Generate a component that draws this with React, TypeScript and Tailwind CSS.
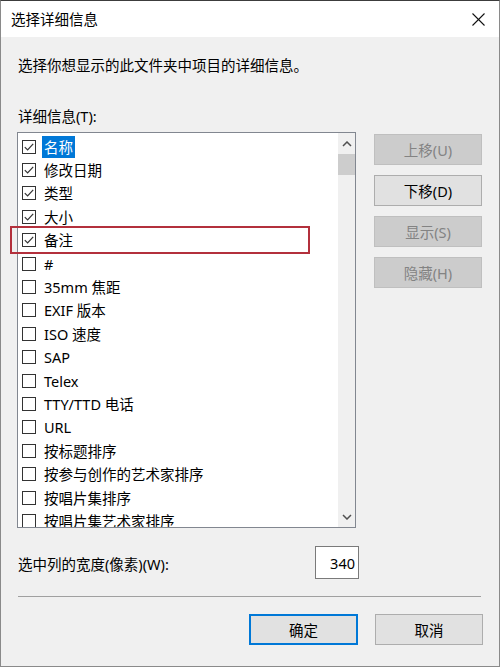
import React from "react";

const items = [
  { name: "名称", checked: true, selected: true },
  { name: "修改日期", checked: true },
  { name: "类型", checked: true },
  { name: "大小", checked: true },
  { name: "备注", checked: true },
  { name: "#", checked: false },
  { name: "35mm 焦距", checked: false },
  { name: "EXIF 版本", checked: false },
  { name: "ISO 速度", checked: false },
  { name: "SAP", checked: false },
  { name: "Telex", checked: false },
  { name: "TTY/TTD 电话", checked: false },
  { name: "URL", checked: false },
  { name: "按标题排序", checked: false },
  { name: "按参与创作的艺术家排序", checked: false },
  { name: "按唱片集排序", checked: false },
  { name: "按唱片集艺术家排序", checked: false },
];

function CheckBox({ checked }: { checked: boolean }) {
  return (
    <div className="w-[14px] h-[14px] border border-[#333333] bg-white flex items-center justify-center shrink-0">
      {checked && (
        <svg width="12" height="12" viewBox="0 0 12 12">
          <polyline
            points="1.8,6.2 4.6,9 10.2,2.8"
            fill="none"
            stroke="#333333"
            strokeWidth="1.2"
          />
        </svg>
      )}
    </div>
  );
}

function SideButton({ label, disabled }: { label: string; disabled?: boolean }) {
  return (
    <div
      className={
        disabled
          ? "w-[108px] h-[31px] flex items-center justify-center border border-[#bfbfbf] bg-[#cccccc] text-[#838383]"
          : "w-[108px] h-[31px] flex items-center justify-center border border-[#adadad] bg-[#e1e1e1] text-black"
      }
    >
      {label}
    </div>
  );
}

export default function App() {
  return (
    <div className="relative w-[500px] h-[667px] bg-[#f0f0f0] border-x border-b border-[#8a8a8a] border-t border-t-[#3c3c3c] font-['Noto_Sans','Noto_Sans_CJK_SC',sans-serif] text-[14.5px] text-black leading-[20px] overflow-hidden">
      {/* title bar */}
      <div className="h-[36px] bg-white flex items-center justify-between pl-[10px] pr-[14px]">
        <span>选择详细信息</span>
        <svg width="13" height="13" viewBox="0 0 13 13">
          <line x1="0.5" y1="0.5" x2="12.5" y2="12.5" stroke="#111" strokeWidth="1.1" />
          <line x1="12.5" y1="0.5" x2="0.5" y2="12.5" stroke="#111" strokeWidth="1.1" />
        </svg>
      </div>

      <div className="pl-[16px] pr-[17px]">
        <div className="mt-[18px] pl-px">选择你想显示的此文件夹中项目的详细信息。</div>
        <div className="mt-[31px] pl-px">详细信息(T):</div>

        <div className="mt-[6px] flex gap-[18px]">
          {/* list box */}
          <div className="w-[340px] h-[396px] border border-[#828790] bg-white flex overflow-hidden">
            <div className="flex-1 pt-[2px] overflow-hidden">
              {items.map((it) => (
                <div key={it.name} className="h-[23.4px] flex items-center pl-[4px]">
                  <CheckBox checked={it.checked} />
                  <span
                    className={
                      it.selected
                        ? "ml-[6px] px-[2px] h-[22px] flex items-center bg-[#0078d7] text-white whitespace-nowrap"
                        : "ml-[6px] px-[2px] whitespace-nowrap"
                    }
                  >
                    {it.name}
                  </span>
                </div>
              ))}
            </div>
            {/* scrollbar */}
            <div className="w-[17px] bg-[#f0f0f0] flex flex-col">
              <div className="h-[21px] flex items-center justify-center">
                <svg width="10" height="6" viewBox="0 0 10 6">
                  <polyline points="1,5 5,1 9,5" fill="none" stroke="#505050" strokeWidth="1.5" />
                </svg>
              </div>
              <div className="h-[21px] bg-[#cdcdcd]" />
              <div className="flex-1" />
              <div className="h-[21px] flex items-center justify-center">
                <svg width="10" height="6" viewBox="0 0 10 6">
                  <polyline points="1,1 5,5 9,1" fill="none" stroke="#505050" strokeWidth="1.5" />
                </svg>
              </div>
            </div>
          </div>

          {/* side buttons */}
          <div className="pt-[2px] flex flex-col gap-[10px]">
            <SideButton label="上移(U)" disabled />
            <SideButton label="下移(D)" />
            <SideButton label="显示(S)" disabled />
            <SideButton label="隐藏(H)" disabled />
          </div>
        </div>

        {/* width row */}
        <div className="mt-[20px] flex items-center w-[342px] justify-between">
          <span className="pl-px">选中列的宽度(像素)(W):</span>
          <div className="w-[44px] h-[33px] bg-white border border-[#7a7a7a] flex items-center justify-end pr-[3px] -mt-[2px]">
            340
          </div>
        </div>

        <div className="mt-[17px] h-px bg-[#a0a0a0] w-[463px] ml-px" />

        <div className="mt-[17px] flex justify-end gap-[17px] -mr-px">
          <div className="w-[109px] h-[31px] flex items-center justify-center border-2 border-[#0078d7] bg-[#e1e1e1]">
            确定
          </div>
          <div className="w-[108px] h-[31px] flex items-center justify-center border border-[#adadad] bg-[#e1e1e1]">
            取消
          </div>
        </div>
      </div>

      {/* annotation box */}
      <div className="absolute left-[9px] top-[225px] w-[300px] h-[28px] border-2 border-[#b3303c]" />
    </div>
  );
}
